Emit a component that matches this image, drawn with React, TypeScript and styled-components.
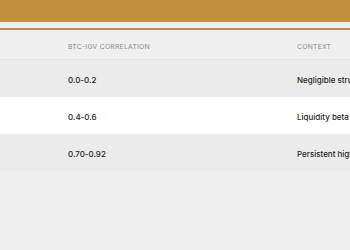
import styled, { createGlobalStyle } from 'styled-components'

const GlobalStyle = createGlobalStyle`
  html, body {
    margin: 0;
    padding: 0;
    background: #efefef;
  }
  body {
    font-family: Inter, 'Liberation Sans', sans-serif;
    width: 350px;
    height: 250px;
    overflow: hidden;
  }
`

const Page = styled.div`
  width: 350px;
  height: 250px;
  overflow: hidden;
  background: #efefef;
`

const Banner = styled.div`
  height: 22px;
  background: #c18f3e;
`

const Table = styled.div`
  margin-top: 6px;
  border-top: 2px solid #c18f3e;
  display: flex;
  flex-direction: column;
`

interface RowProps {
  $bg?: string
}

const Row = styled.div<RowProps>`
  display: grid;
  grid-template-columns: 68px 229px 1fr;
  height: 37px;
  align-items: center;
  background: ${(p) => p.$bg || 'transparent'};
  white-space: nowrap;
  overflow: hidden;
`

const HeaderRow = styled(Row)`
  height: 29px;
  border-bottom: 1px solid #e4e4e4;
`

const HeadCell = styled.div`
  font-size: 6.8px;
  letter-spacing: 0.25px;
  color: #8a8a8a;
  text-transform: uppercase;
  padding-top: 3px;
`

const Cell = styled.div`
  font-size: 8px;
  font-weight: 500;
  color: #1f1f1f;
  overflow: hidden;
  padding-top: 2px;
`

const rows = [
  { range: '0.0-0.2', context: 'Negligible structural link', bg: '#ebebeb' },
  { range: '0.4-0.6', context: 'Liquidity beta overlap', bg: '#ffffff' },
  { range: '0.70-0.92', context: 'Persistent high correlation', bg: '#ebebeb' },
]

const App = () => {
  return (
    <Page>
      <GlobalStyle />
      <Banner />
      <Table>
        <HeaderRow>
          <HeadCell />
          <HeadCell>BTC-IGV Correlation</HeadCell>
          <HeadCell>Context</HeadCell>
        </HeaderRow>
        {rows.map((row, index) => (
          <Row $bg={row.bg} key={`row-${index}`}>
            <Cell />
            <Cell>{row.range}</Cell>
            <Cell>{row.context}</Cell>
          </Row>
        ))}
      </Table>
    </Page>
  )
}

export default App
